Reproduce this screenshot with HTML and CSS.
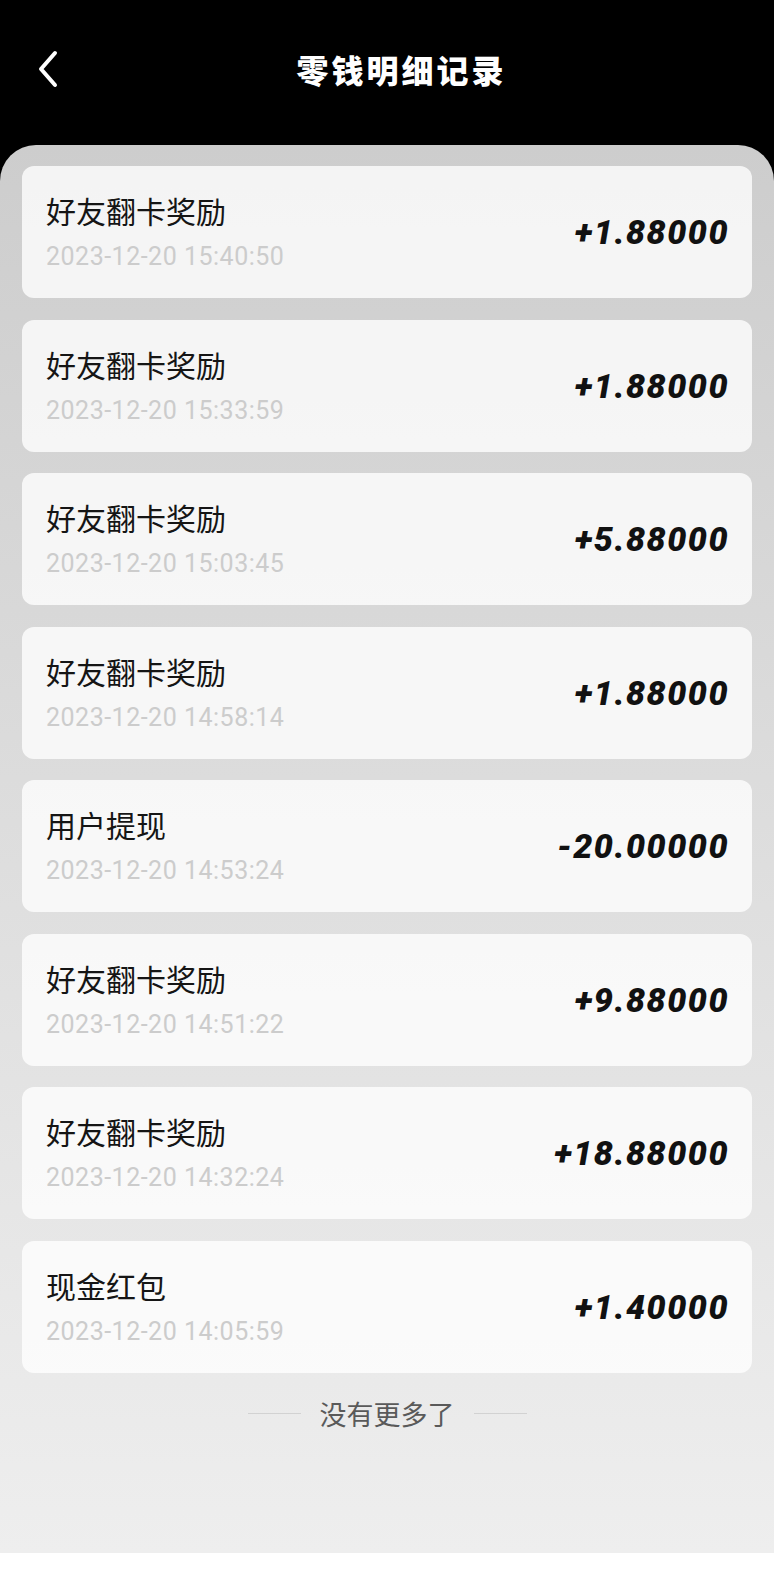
FILE: index.html
```html
<!doctype html>
<html lang="zh-CN">
<head>
    <meta charset="utf-8">
    <meta name="viewport" content="width=device-width, initial-scale=1">
    <link rel="stylesheet" href="styles.css">
    <title>零钱明细记录</title>
</head>
<body>
<div class="top">
    <header class="nav">
        <a class="back" href="#" aria-label="返回">
            <svg width="30" height="40" viewBox="0 0 30 40">
                <path d="M22 4 L8 20 L22 36" fill="none" stroke="#fff" stroke-width="4" stroke-linecap="round" stroke-linejoin="round"/>
            </svg>
        </a>
        <h1 class="title">零钱明细记录</h1>
        <span></span>
    </header>
    <main class="panel">
        <ul class="list">
            <li class="item">
                <div class="info">
                    <p class="name">好友翻卡奖励</p>
                    <p class="time">2023-12-20 15:40:50</p>
                </div>
                <span class="amount">+1.88000</span>
            </li>
            <li class="item">
                <div class="info">
                    <p class="name">好友翻卡奖励</p>
                    <p class="time">2023-12-20 15:33:59</p>
                </div>
                <span class="amount">+1.88000</span>
            </li>
            <li class="item">
                <div class="info">
                    <p class="name">好友翻卡奖励</p>
                    <p class="time">2023-12-20 15:03:45</p>
                </div>
                <span class="amount">+5.88000</span>
            </li>
            <li class="item">
                <div class="info">
                    <p class="name">好友翻卡奖励</p>
                    <p class="time">2023-12-20 14:58:14</p>
                </div>
                <span class="amount">+1.88000</span>
            </li>
            <li class="item">
                <div class="info">
                    <p class="name">用户提现</p>
                    <p class="time">2023-12-20 14:53:24</p>
                </div>
                <span class="amount">-20.00000</span>
            </li>
            <li class="item">
                <div class="info">
                    <p class="name">好友翻卡奖励</p>
                    <p class="time">2023-12-20 14:51:22</p>
                </div>
                <span class="amount">+9.88000</span>
            </li>
            <li class="item">
                <div class="info">
                    <p class="name">好友翻卡奖励</p>
                    <p class="time">2023-12-20 14:32:24</p>
                </div>
                <span class="amount">+18.88000</span>
            </li>
            <li class="item">
                <div class="info">
                    <p class="name">现金红包</p>
                    <p class="time">2023-12-20 14:05:59</p>
                </div>
                <span class="amount">+1.40000</span>
            </li>
        </ul>
        <p class="end">没有更多了</p>
    </main>
</div>
</body>
</html>
```

FILE: styles.css
```css
html, body {
    margin: 0;
    background-color: #fff;
    font-family: "Noto Sans CJK SC", "Noto Sans", sans-serif;
}

* {
    box-sizing: border-box;
}

.top {
    background-color: #000;
}

.nav {
    height: 145px;
    padding: 0 0 7px 33px;
    display: grid;
    grid-template-columns: 1fr auto 1fr;
    align-items: center;
}

.back {
    display: flex;
    width: 30px;
}

.title {
    margin: 0 0 0 -4px;
    color: #fff;
    font-size: 32px;
    font-weight: 900;
    letter-spacing: 3px;
    line-height: 40px;
}

.panel {
    height: 1408px;
    padding: 21px 22px 0;
    border-radius: 36px 36px 0 0;
    background: linear-gradient(#cdcdcd, #dcdcdc 45%, #eeeeee);
}

.list {
    list-style: none;
    margin: 0;
    padding: 0;
    display: flex;
    flex-direction: column;
    gap: 21.5px;
}

.item {
    height: 132px;
    padding: 0 23px 0 24px;
    border-radius: 12px;
    background-color: rgba(255, 255, 255, 0.78);
    display: flex;
    align-items: center;
    justify-content: space-between;
}

.info p {
    margin: 0;
}

.name {
    color: #151515;
    font-size: 30px;
    line-height: 36px;
}

.time {
    margin-top: 14px !important;
    color: #cccccc;
    font-family: Roboto, "Noto Sans", sans-serif;
    font-size: 25px;
    letter-spacing: 0.5px;
    line-height: 30px;
}

.amount {
    color: #111;
    font-family: Roboto, sans-serif;
    font-style: italic;
    font-weight: 900;
    font-size: 34px;
    letter-spacing: 1.5px;
}

.end {
    margin: 21px 0 0;
    color: #5a5a5a;
    font-size: 27px;
    line-height: 40px;
    display: flex;
    align-items: center;
    justify-content: center;
    gap: 19px;
}

.end::before,
.end::after {
    content: "";
    width: 53px;
    height: 1px;
    background-color: #d2d2d2;
}
```
